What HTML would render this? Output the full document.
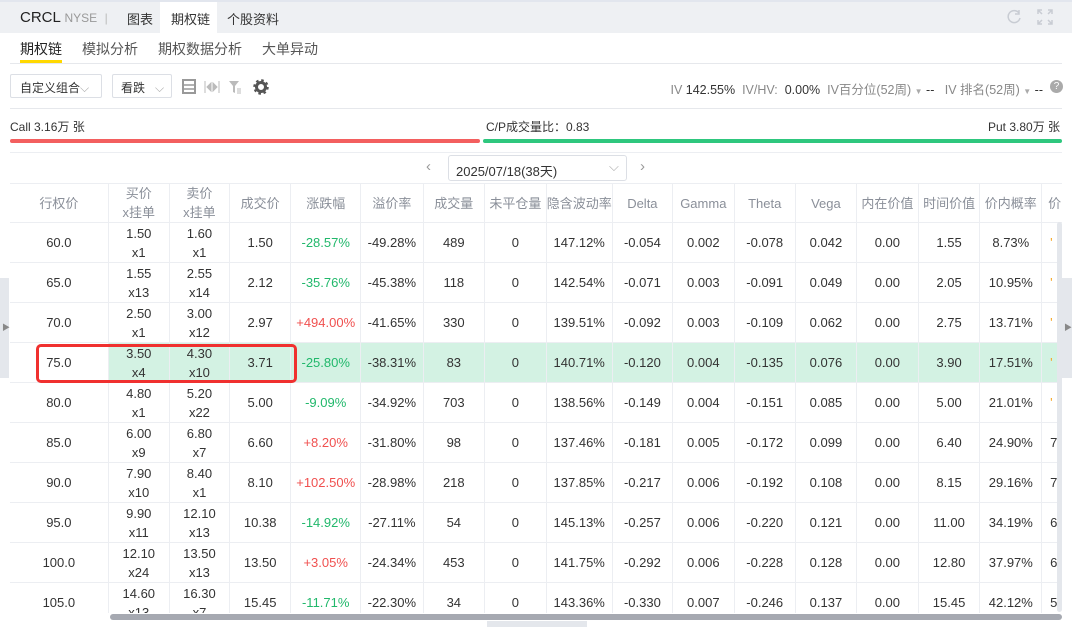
<!DOCTYPE html>
<html><head><meta charset="utf-8"><style>
*{margin:0;padding:0;box-sizing:border-box}
body{width:1072px;height:627px;overflow:hidden;background:#fff;font-family:"Liberation Sans","Noto Sans CJK SC",sans-serif;color:#333;position:relative;font-size:13px}
.a{position:absolute;white-space:nowrap}
table{position:absolute;left:10px;top:183px;border-collapse:collapse;table-layout:fixed}
td{border:1px solid #eceef2;text-align:center;height:40px;font-size:13px;color:#333;line-height:19px;overflow:hidden;white-space:nowrap}
tr td:first-child{border-left:none}
tr.h td{color:#8a8f99;height:39px}
tr.s td{background:#d3f2e3}
tr.s td:first-child{background:#fff}
.g{color:#21b86b!important}.r{color:#f0504f!important}
.o{color:#f5a623!important;text-align:left;padding-left:8px}
</style></head><body>
<div class="a" style="left:0;top:0;width:1072px;height:33px;background:#eef0f3;border-top:2px solid #e2e6ee"></div>
<div class="a" style="left:160px;top:2px;width:57px;height:31px;background:#fff"></div>
<div class="a" style="left:20px;top:9px;font-size:15px;color:#222">CRCL <span style="font-size:12px;color:#999">NYSE</span> <span style="color:#bbb;font-size:12px">&nbsp;|</span></div>
<div class="a" style="left:127px;top:9px;font-size:13px">图表</div>
<div class="a" style="left:171px;top:9px;font-size:13px">期权链</div>
<div class="a" style="left:227px;top:9px;font-size:13px">个股资料</div>
<svg class="a" style="left:1006px;top:9px" width="16" height="16" viewBox="0 0 16 16"><path d="M13 4A6 6 0 1 0 14 9" fill="none" stroke="#c8ccd3" stroke-width="1.5"/><path d="M13 1v4h-4" fill="none" stroke="#c8ccd3" stroke-width="1.5"/></svg>
<svg class="a" style="left:1037px;top:9px" width="16" height="16" viewBox="0 0 16 16" fill="none" stroke="#c8ccd3" stroke-width="1.5"><path d="M1 5V1h4M11 1h4v4M15 11v4h-4M5 15H1v-4M1 1l4 4M15 1l-4 4M15 15l-4-4M1 15l4-4"/></svg>
<div class="a" style="left:20px;top:39px;font-size:14px;color:#222">期权链</div>
<div class="a" style="left:20px;top:60px;width:42px;height:3px;background:#ffd800"></div>
<div class="a" style="left:82px;top:39px;font-size:14px;color:#555">模拟分析</div>
<div class="a" style="left:158px;top:39px;font-size:14px;color:#555">期权数据分析</div>
<div class="a" style="left:262px;top:39px;font-size:14px;color:#555">大单异动</div>
<div class="a" style="left:10px;top:63px;width:1052px;height:1px;background:#e6e8ec"></div>
<div class="a" style="left:10px;top:74px;width:92px;height:24px;border:1px solid #dcdfe5;border-radius:2px;padding:4px 0 0 9px;font-size:12px">自定义组合<span style="color:#aaa">⌵</span></div>
<div class="a" style="left:112px;top:74px;width:60px;height:24px;border:1px solid #dcdfe5;border-radius:2px;padding:4px 0 0 8px;font-size:12px">看跌 &nbsp;&nbsp;<span style="color:#aaa">⌵</span></div>
<svg class="a" style="left:182px;top:79px" width="90" height="16" viewBox="0 0 90 16"><rect x="1" y="1" width="12" height="13" fill="none" stroke="#999" stroke-width="2"/><path d="M1 6h12M1 10h12" stroke="#999" stroke-width="1.5"/><path d="M23 2v12M25 8l4-4v8z M35 8l-4-4v8z M37 2v12" fill="#bbb" stroke="#bbb"/><path d="M47 2h10l-4 5v7l-2-1v-6z" fill="#bbb"/><path d="M55 10h4M55 12h4M55 14h4" stroke="#bbb"/><circle cx="79" cy="8" r="4.5" fill="none" stroke="#555" stroke-width="3"/><circle cx="79" cy="8" r="6.5" fill="none" stroke="#555" stroke-width="2.5" stroke-dasharray="2.5 2.6"/></svg>
<div class="a" style="right:29px;top:79px;font-size:12.5px;color:#888">IV <span style="color:#333">142.55%</span> &nbsp;IV/HV: &nbsp;<span style="color:#333">0.00%</span> &nbsp;IV百分位(52周) <span style="font-size:8px;color:#aaa">▼</span> <span style="color:#333">--</span> &nbsp;&nbsp;IV 排名(52周) <span style="font-size:8px;color:#aaa">▼</span> <span style="color:#333">--</span></div>
<div class="a" style="left:1050px;top:80px;width:13px;height:13px;border-radius:50%;background:#aaa;color:#fff;font-size:10px;text-align:center;line-height:13px">?</div>
<div class="a" style="left:10px;top:108px;width:1052px;height:1px;background:#e6e8ec"></div>
<div class="a" style="left:10px;top:118px;font-size:12px">Call 3.16万 张</div>
<div class="a" style="left:486px;top:118px;font-size:12px">C/P成交量比：0.83</div>
<div class="a" style="left:988px;top:118px;font-size:12px">Put 3.80万 张</div>
<div class="a" style="left:10px;top:139px;width:470px;height:4px;background:#f35f5f;border-radius:2px"></div>
<div class="a" style="left:483px;top:139px;width:579px;height:4px;background:#2ec77e;border-radius:2px"></div>
<div class="a" style="left:10px;top:152px;width:1052px;height:1px;background:#eceef2"></div>
<div class="a" style="left:426px;top:158px;font-size:15px;color:#999">‹</div>
<div class="a" style="left:448px;top:155px;width:179px;height:26px;border:1px solid #dcdfe5;border-radius:3px;padding:5px 0 0 7px;font-size:13px">2025/07/18(38天)<span class="a" style="left:160px;top:3px;color:#aaa">⌵</span></div>
<div class="a" style="left:640px;top:158px;font-size:15px;color:#999">›</div>
<table>
<colgroup><col style="width:100px"><col style="width:62px"><col style="width:61px"><col style="width:62px"><col style="width:70px"><col style="width:63px"><col style="width:62px"><col style="width:62px"><col style="width:62px"><col style="width:61px"><col style="width:62px"><col style="width:62px"><col style="width:62px"><col style="width:62px"><col style="width:62px"><col style="width:62px"><col style="width:30px"></colgroup>
<tr class="h"><td>行权价</td><td>买价<br>x挂单</td><td>卖价<br>x挂单</td><td>成交价</td><td>涨跌幅</td><td>溢价率</td><td>成交量</td><td>未平仓量</td><td>隐含波动率</td><td>Delta</td><td>Gamma</td><td>Theta</td><td>Vega</td><td>内在价值</td><td>时间价值</td><td>价内概率</td><td style="text-align:left;padding-left:6px">价</td></tr>
<tr><td>60.0</td><td>1.50<br>x1</td><td>1.60<br>x1</td><td>1.50</td><td class="g">-28.57%</td><td>-49.28%</td><td>489</td><td>0</td><td>147.12%</td><td>-0.054</td><td>0.002</td><td>-0.078</td><td>0.042</td><td>0.00</td><td>1.55</td><td>8.73%</td><td class="o">'</td></tr>
<tr><td>65.0</td><td>1.55<br>x13</td><td>2.55<br>x14</td><td>2.12</td><td class="g">-35.76%</td><td>-45.38%</td><td>118</td><td>0</td><td>142.54%</td><td>-0.071</td><td>0.003</td><td>-0.091</td><td>0.049</td><td>0.00</td><td>2.05</td><td>10.95%</td><td class="o">'</td></tr>
<tr><td>70.0</td><td>2.50<br>x1</td><td>3.00<br>x12</td><td>2.97</td><td class="r">+494.00%</td><td>-41.65%</td><td>330</td><td>0</td><td>139.51%</td><td>-0.092</td><td>0.003</td><td>-0.109</td><td>0.062</td><td>0.00</td><td>2.75</td><td>13.71%</td><td class="o">'</td></tr>
<tr class="s"><td>75.0</td><td>3.50<br>x4</td><td>4.30<br>x10</td><td>3.71</td><td class="g">-25.80%</td><td>-38.31%</td><td>83</td><td>0</td><td>140.71%</td><td>-0.120</td><td>0.004</td><td>-0.135</td><td>0.076</td><td>0.00</td><td>3.90</td><td>17.51%</td><td class="o">'</td></tr>
<tr><td>80.0</td><td>4.80<br>x1</td><td>5.20<br>x22</td><td>5.00</td><td class="g">-9.09%</td><td>-34.92%</td><td>703</td><td>0</td><td>138.56%</td><td>-0.149</td><td>0.004</td><td>-0.151</td><td>0.085</td><td>0.00</td><td>5.00</td><td>21.01%</td><td class="o">'</td></tr>
<tr><td>85.0</td><td>6.00<br>x9</td><td>6.80<br>x7</td><td>6.60</td><td class="r">+8.20%</td><td>-31.80%</td><td>98</td><td>0</td><td>137.46%</td><td>-0.181</td><td>0.005</td><td>-0.172</td><td>0.099</td><td>0.00</td><td>6.40</td><td>24.90%</td><td style="text-align:left;padding-left:8px">7</td></tr>
<tr><td>90.0</td><td>7.90<br>x10</td><td>8.40<br>x1</td><td>8.10</td><td class="r">+102.50%</td><td>-28.98%</td><td>218</td><td>0</td><td>137.85%</td><td>-0.217</td><td>0.006</td><td>-0.192</td><td>0.108</td><td>0.00</td><td>8.15</td><td>29.16%</td><td style="text-align:left;padding-left:8px">7</td></tr>
<tr><td>95.0</td><td>9.90<br>x11</td><td>12.10<br>x13</td><td>10.38</td><td class="g">-14.92%</td><td>-27.11%</td><td>54</td><td>0</td><td>145.13%</td><td>-0.257</td><td>0.006</td><td>-0.220</td><td>0.121</td><td>0.00</td><td>11.00</td><td>34.19%</td><td style="text-align:left;padding-left:8px">6</td></tr>
<tr><td>100.0</td><td>12.10<br>x24</td><td>13.50<br>x13</td><td>13.50</td><td class="r">+3.05%</td><td>-24.34%</td><td>453</td><td>0</td><td>141.75%</td><td>-0.292</td><td>0.006</td><td>-0.228</td><td>0.128</td><td>0.00</td><td>12.80</td><td>37.97%</td><td style="text-align:left;padding-left:8px">6</td></tr>
<tr><td>105.0</td><td>14.60<br>x13</td><td>16.30<br>x7</td><td>15.45</td><td class="g">-11.71%</td><td>-22.30%</td><td>34</td><td>0</td><td>143.36%</td><td>-0.330</td><td>0.007</td><td>-0.246</td><td>0.137</td><td>0.00</td><td>15.45</td><td>42.12%</td><td style="text-align:left;padding-left:8px">5</td></tr>
</table>
<div class="a" style="left:1062px;top:150px;width:10px;height:477px;background:#fff"></div>
<div class="a" style="left:1057px;top:222px;width:5px;height:390px;background:#e4e7ec;border-radius:3px"></div>
<div class="a" style="left:1062px;top:278px;width:10px;height:100px;background:#e4e7ec"></div>
<div class="a" style="left:1064px;top:322px;font-size:8px;color:#888">▶</div>
<div class="a" style="left:0;top:278px;width:9px;height:100px;background:#e4e7ec"></div>
<div class="a" style="left:2px;top:322px;font-size:8px;color:#888">▶</div>
<div class="a" style="left:0;top:613px;width:1072px;height:14px;background:#fff"></div>
<div class="a" style="left:110px;top:614px;width:952px;height:6px;background:#a6a9b1;border-radius:3px"></div>
<div class="a" style="left:487px;top:621px;width:100px;height:6px;background:#e4e7ec"></div>
<div class="a" style="left:36px;top:344px;width:261px;height:39px;border:3px solid #f0302f;border-radius:5px"></div>
</body></html>
